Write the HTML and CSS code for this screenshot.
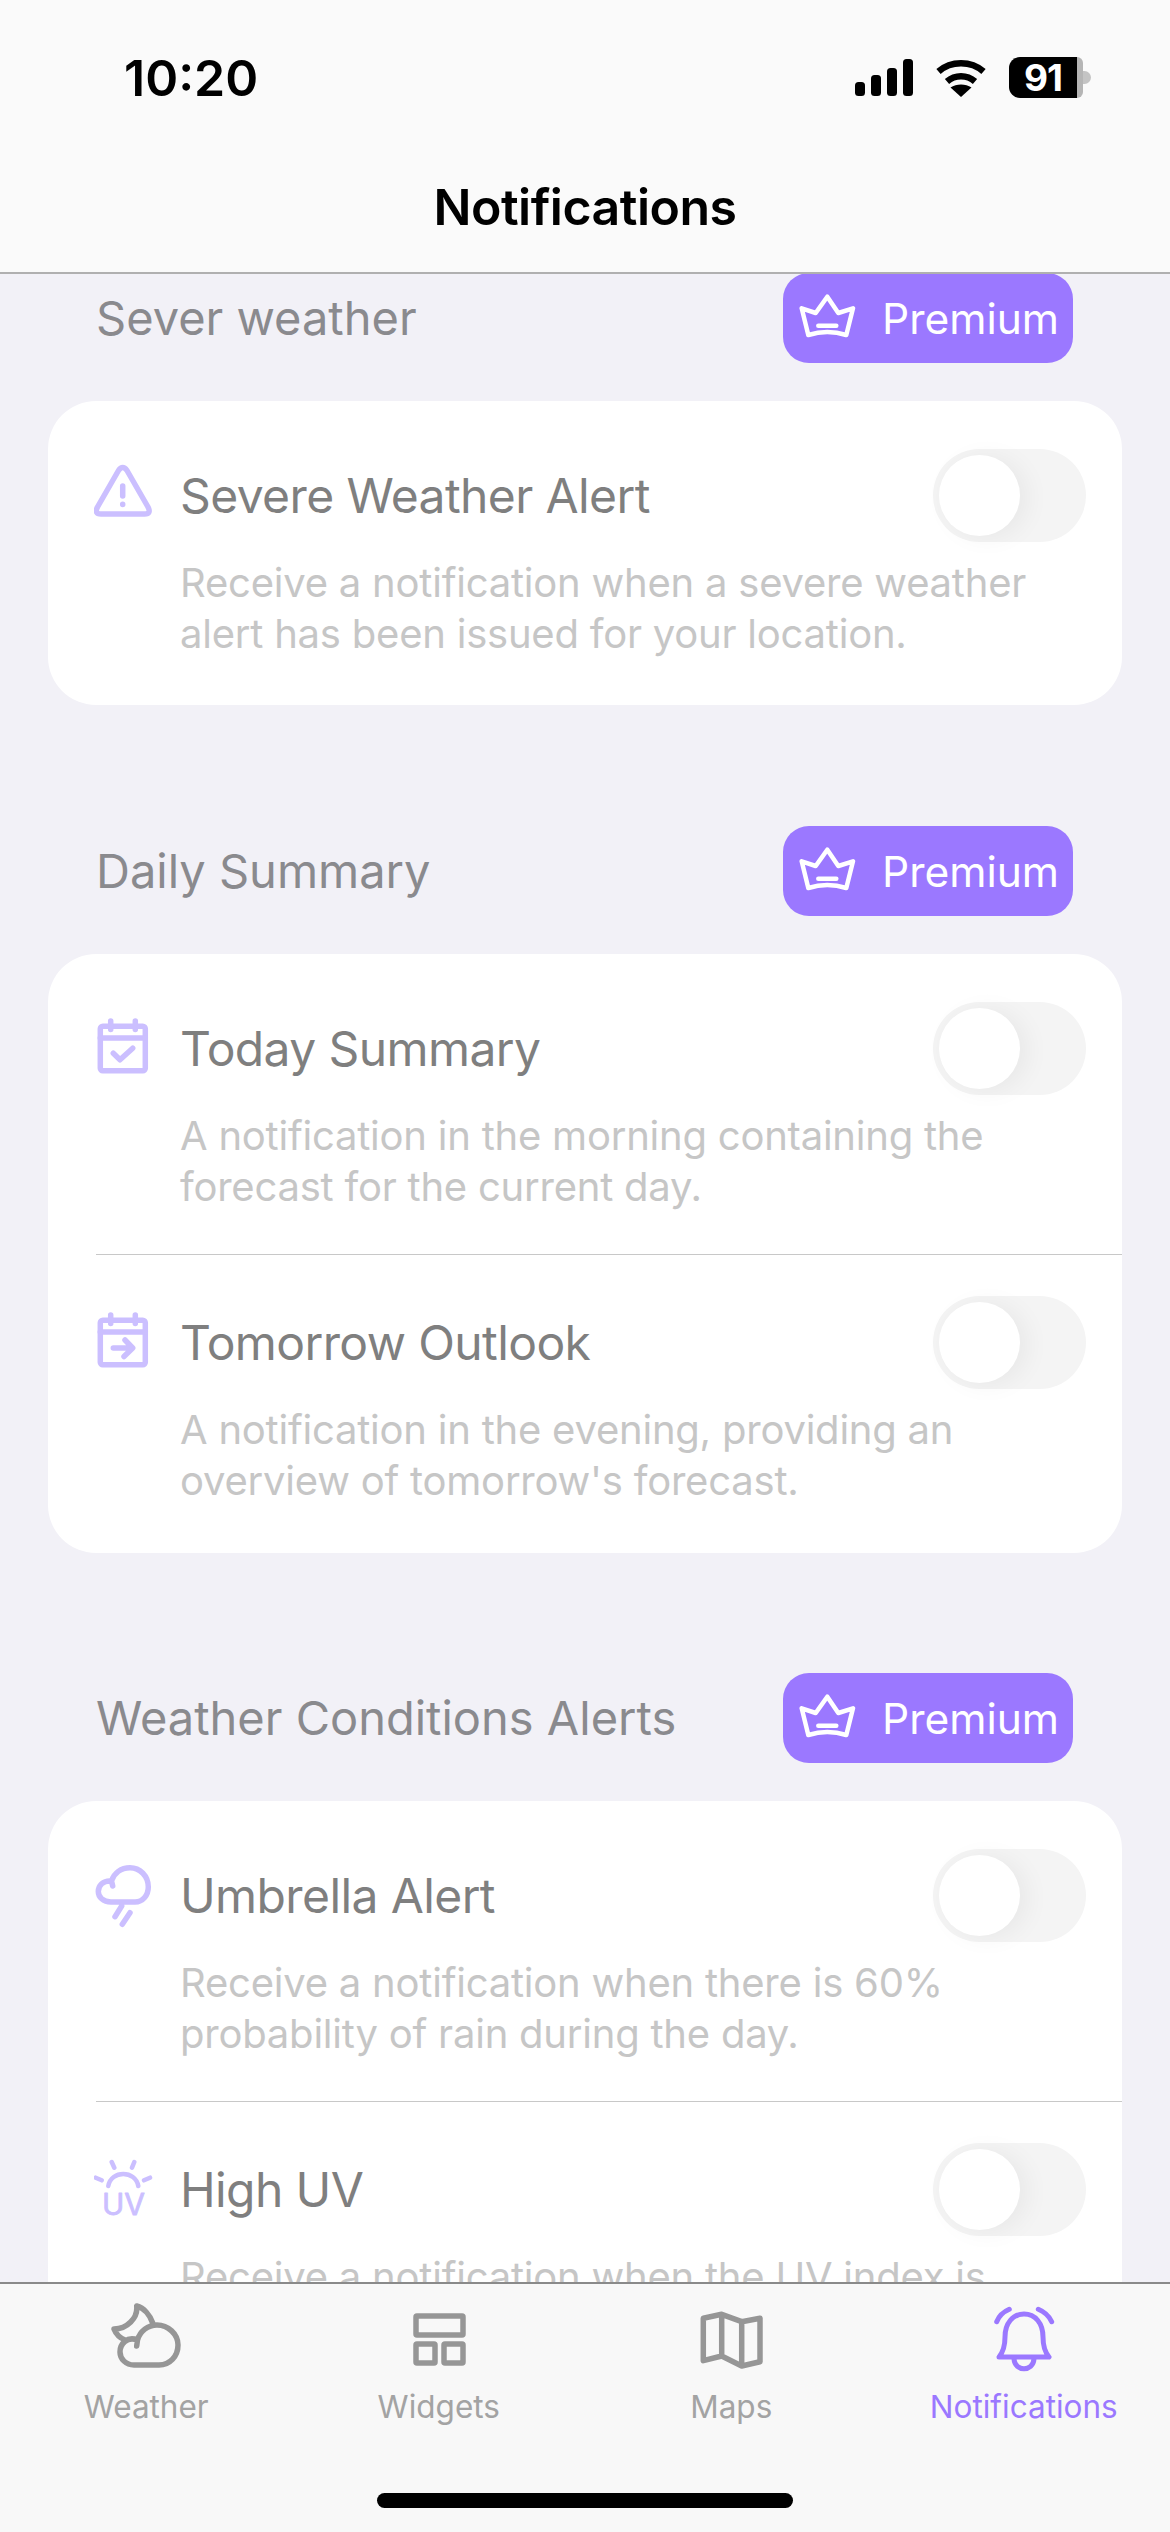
FILE: index.html
```html
<!DOCTYPE html>
<html lang="en">
<head>
<meta charset="utf-8">
<title>Notifications</title>
<link rel="stylesheet" href="styles.css">
</head>
<body>
<div class="app">
  <header class="nav">
    <div class="status">
      <span class="time">10:20</span>
      <div class="status-icons">
        <svg class="signal" viewBox="0 0 58 37"><rect x="0" y="23" width="10" height="14" rx="3.500"/><rect x="16" y="16" width="10" height="21" rx="3.500"/><rect x="32" y="9" width="10" height="28" rx="3.500"/><rect x="48" y="0" width="10" height="37" rx="3.500"/></svg>
        <svg class="wifi" viewBox="0 0 52 38"><path class="wifi-arc" d="M3.500 12.500C16 1.500 36 1.500 48.500 12.500"/><path class="wifi-arc" d="M12 22.500C20 15.500 32 15.500 40 22.500"/><path d="M26 38 15.500 28.500C21.500 24.500 30.500 24.500 36.500 28.500Z"/></svg>
        <div class="battery"><span class="level">91</span><span class="rest"></span><span class="nub"></span></div>
      </div>
    </div>
    <h1 class="title">Notifications</h1>
  </header>

  <main class="content">
    <section class="section section-first">
      <div class="section-head">
        <h2 class="section-title">Sever weather</h2>
        <div class="badge">
          <svg class="crown" viewBox="0 0 57 50"><path d="M2.700 15.300 16.700 20 28.300 3.700 39.300 20 54 15.300 47.300 42Q28.300 36 9.300 42Z"/><path d="M19.300 32.700H37.300"/></svg>
          <span>Premium</span>
        </div>
      </div>
      <div class="card">
        <div class="row">
          <div class="row-head">
            <svg class="row-icon" viewBox="0 0 60 70"><path d="M24.500 9.500Q28.700 3.500 33 9.500L54 46Q57.500 53 50.500 53H7Q0 53 3.500 46Z"/><path d="M28.700 25V35M28.700 43.300V43.500"/></svg>
            <span class="row-title">Severe Weather Alert</span>
            <div class="toggle"><span class="thumb"></span></div>
          </div>
          <p class="row-desc">Receive a notification when a severe weather alert has been issued for your location.</p>
        </div>
      </div>
    </section>

    <section class="section">
      <div class="section-head">
        <h2 class="section-title">Daily Summary</h2>
        <div class="badge">
          <svg class="crown" viewBox="0 0 57 50"><path d="M2.700 15.300 16.700 20 28.300 3.700 39.300 20 54 15.300 47.300 42Q28.300 36 9.300 42Z"/><path d="M19.300 32.700H37.300"/></svg>
          <span>Premium</span>
        </div>
      </div>
      <div class="card">
        <div class="row">
          <div class="row-head">
            <svg class="row-icon" viewBox="0 0 60 70"><rect x="6.300" y="12.200" width="45" height="44.600" rx="2.500"/><path d="M6.300 24H51.300M16.700 7V15.500M41.300 7V15.500M19.300 39.200 26 45.800 38.700 34.200"/></svg>
            <span class="row-title">Today Summary</span>
            <div class="toggle"><span class="thumb"></span></div>
          </div>
          <p class="row-desc">A notification in the morning containing the forecast for the current day.</p>
        </div>
        <div class="row row-next">
          <div class="row-head">
            <svg class="row-icon" viewBox="0 0 60 70"><rect x="6.300" y="12.200" width="45" height="44.600" rx="2.500"/><path d="M6.300 24H51.300M16.700 7V15.500M41.300 7V15.500M19.300 40H37.700M31 32 38.700 40 30 48.500"/></svg>
            <span class="row-title">Tomorrow Outlook</span>
            <div class="toggle"><span class="thumb"></span></div>
          </div>
          <p class="row-desc">A notification in the evening, providing an overview of tomorrow's forecast.</p>
        </div>
      </div>
    </section>

    <section class="section section-last">
      <div class="section-head">
        <h2 class="section-title">Weather Conditions Alerts</h2>
        <div class="badge">
          <svg class="crown" viewBox="0 0 57 50"><path d="M2.700 15.300 16.700 20 28.300 3.700 39.300 20 54 15.300 47.300 42Q28.300 36 9.300 42Z"/><path d="M19.300 32.700H37.300"/></svg>
          <span>Premium</span>
        </div>
      </div>
      <div class="card">
        <div class="row">
          <div class="row-head">
            <svg class="row-icon" viewBox="0 0 60 70"><path d="M17 41H41C49 41 54.300 34 54.300 26 54.300 15 46 6.700 36 6.700 27 6.700 20 12 17.500 20 9 19 4.300 25 4.300 30.500 4.300 36 9 41 17 41ZM17.500 20 18.700 25M27.700 45 21 55.700M36 51.700 28.300 63.300"/></svg>
            <span class="row-title">Umbrella Alert</span>
            <div class="toggle"><span class="thumb"></span></div>
          </div>
          <p class="row-desc">Receive a notification when there is 60% probability of rain during the day.</p>
        </div>
        <div class="row row-next">
          <div class="row-head">
            <svg class="row-icon row-icon-uv" viewBox="0 0 60 70"><path d="M14.300 31C17 15 41.500 15 44.300 31M17.700 7 20.300 12.700M40.300 7 38 12.700M1.700 22.700 7.700 25.300M56 22.700 50 25.300"/><text class="uv-text" x="8" y="60">UV</text></svg>
            <span class="row-title">High UV</span>
            <div class="toggle"><span class="thumb"></span></div>
          </div>
          <p class="row-desc">Receive a notification when the UV index is high in your location today.</p>
        </div>
      </div>
    </section>
  </main>

  <footer class="tabbar">
    <nav class="tabs">
      <div class="tab">
        <svg class="tab-icon" viewBox="0 0 70 70"><path d="M41.700 20C39 12 33 5 25.700 3 27 15 16 26 3 26 5 31 9 35 14 37"/><path d="M23 62H48C59 62 67 53 67 42 67 31 57 22 46 22 37 22 29 28 26.500 37 16 33 9 41 9 49 9 56 15 62 23 62ZM26.500 37 25.700 43"/></svg>
        <span class="tab-label">Weather</span>
      </div>
      <div class="tab">
        <svg class="tab-icon" viewBox="0 0 70 70"><rect x="12" y="13" width="47" height="19" rx="1"/><rect x="12" y="41" width="19" height="19" rx="1"/><rect x="40" y="41" width="19" height="19" rx="1"/></svg>
        <span class="tab-label">Widgets</span>
      </div>
      <div class="tab">
        <svg class="tab-icon" viewBox="0 0 70 70"><path d="M7.300 15.300 25.700 11.300 45.700 18.700 64 15.300V58.700L45.700 63 25.700 53 7.300 57.700ZM25.700 11.300V53M45.700 18.700V63"/></svg>
        <span class="tab-label">Maps</span>
      </div>
      <div class="tab tab-active">
        <svg class="tab-icon" viewBox="0 0 70 70"><path d="M7.700 18.700C10 13 14 9 20.300 6.300M62.700 18.700C60 13 56 9 49.300 6.300M10 54C15 48 16 42 16 34 16 20 24 11 35 11 46 11 54 20 54 34 54 42 55 48 60 54ZM25 56C26 69 44 69 45 56"/></svg>
        <span class="tab-label">Notifications</span>
      </div>
    </nav>
    <div class="home"></div>
  </footer>
</div>
</body>
</html>
```
FILE: styles.css
```css
* { box-sizing: border-box; margin: 0; padding: 0; }
html, body { width: 1170px; height: 2532px; overflow: hidden; }
body { font-family: Inter, "Liberation Sans", sans-serif; background: #f2f1f7; }
.app { width: 1170px; height: 2532px; display: flex; flex-direction: column; }

.nav { height: 274px; flex: none; background: #fafafa; border-bottom: 2px solid #b0b0b0; display: flex; flex-direction: column; }
.status { height: 177px; display: flex; justify-content: space-between; align-items: flex-start; padding: 48px 79px 0 124px; }
.time { font-size: 50px; line-height: 60px; font-weight: 600; color: #000; letter-spacing: 0; }
.status-icons { display: flex; align-items: center; gap: 22px; padding-top: 9px; }
.signal { width: 58px; height: 37px; fill: #000; }
.wifi { width: 52px; height: 38px; fill: #000; }
.wifi-arc { fill: none; stroke: #000; stroke-width: 6.500; }
.battery { width: 82px; height: 41px; display: flex; align-items: stretch; }
.level { width: 68px; background: #000; color: #fff; font-size: 37px; font-weight: 700; line-height: 41px; text-align: center; border-radius: 11px 0 0 11px; letter-spacing: -1px; }
.rest { width: 6px; background: #b5b5b5; border-radius: 0 10px 10px 0; }
.nub { width: 8px; height: 13px; align-self: center; background: #c4c4c4; border-radius: 0 7px 7px 0; }
.title { font-size: 50px; line-height: 60px; font-weight: 600; text-align: center; color: #000; letter-spacing: -0.5px; }

.content { flex: 1; min-height: 0; overflow: hidden; }
.section { padding: 0 48px; margin-top: 121px; }
.section-first { margin-top: -1px; }
.section-last { margin-top: 120px; }
.section-head { display: flex; justify-content: space-between; align-items: center; padding: 0 49px 0 48px; height: 90px; }
.section-title { font-size: 47px; line-height: 60px; font-weight: 400; color: #8a8a8e; letter-spacing: 0; }
.badge { width: 290px; height: 90px; background: #9b78ff; border-radius: 26px; display: flex; align-items: center; padding-left: 16px; gap: 26px; color: #fff; font-size: 42.500px; }
.crown { width: 57px; height: 50px; flex: none; fill: none; stroke: #fff; stroke-width: 4.500; stroke-linecap: round; stroke-linejoin: round; }

.card { margin-top: 38px; background: #fff; border-radius: 48px; padding: 5px 0 4px 48px; }
.row { height: 295px; padding-top: 43px; }
.row-next { border-top: 1px solid #c8c8c8; padding-top: 41px; }
.row-head { display: flex; align-items: center; height: 93px; padding-right: 36px; }
.row-icon { width: 60px; height: 70px; flex: none; margin-left: -2px; fill: none; stroke: #cbbfff; stroke-width: 5.500; stroke-linecap: round; stroke-linejoin: round; }
.row-icon-uv { stroke-width: 4.500; }
.uv-text { font-size: 30px; font-weight: 400; fill: #cbbfff; stroke: #cbbfff; stroke-width: 0.8px; }
.row-title { flex: 1; margin-left: 26px; font-size: 48px; line-height: 60px; color: #7f7f7f; letter-spacing: -0.6px; }
.toggle { width: 153px; height: 93px; flex: none; background: #f4f4f4; border-radius: 47px; padding: 6px; }
.thumb { display: block; width: 81px; height: 81px; background: #fff; border-radius: 50%; box-shadow: 8px 2px 24px rgba(0,0,0,0.05); }
.row-desc { margin: 15px 84px 0 84px; font-size: 40px; line-height: 51px; color: #c6c6c6; letter-spacing: -0.22px; }

.tabbar { height: 250px; flex: none; background: #f8f8f8; border-top: 2px solid #8a8a8a; display: flex; flex-direction: column; align-items: center; }
.tabs { display: grid; grid-template-columns: repeat(4, 1fr); width: 100%; height: 209px; }
.tab { display: flex; flex-direction: column; align-items: center; color: #a3a3a3; }
.tab-active { color: #9b78ff; }
.tab-icon { width: 70px; height: 70px; margin-top: 19px; fill: none; stroke: #969696; stroke-width: 5.500; stroke-linecap: round; stroke-linejoin: round; }
.tab-active .tab-icon { stroke: #9b78ff; stroke-width: 5; }
.tab-label { margin-top: 14px; font-size: 31.500px; line-height: 40px; white-space: nowrap; }
.home { width: 416px; height: 15px; background: #000; border-radius: 8px; }
```
